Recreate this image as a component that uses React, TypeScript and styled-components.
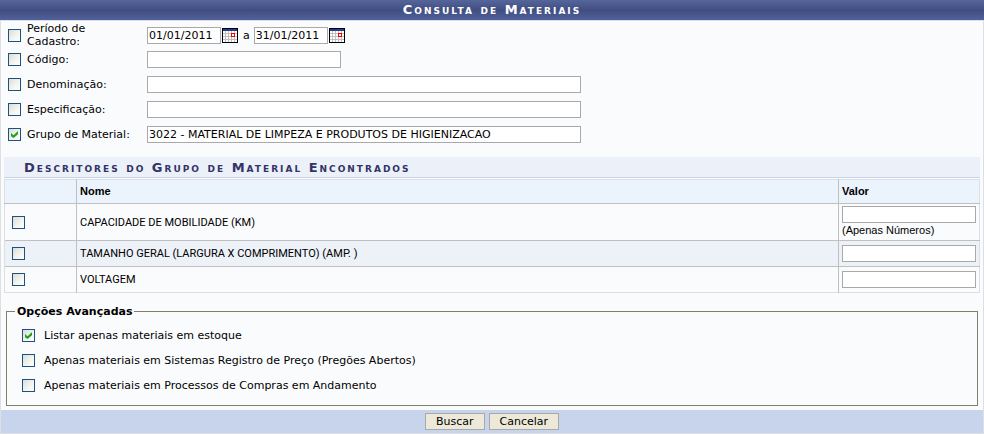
import React, { useState } from "react";
import styled, { createGlobalStyle } from "styled-components";

const GlobalStyle = createGlobalStyle`
  * { box-sizing: border-box; }
  body {
    margin: 0;
    background: #fafbfd;
    color: #000;
    font-family: "DejaVu Sans", Verdana, sans-serif;
    font-size: 11px;
    line-height: 13px;
  }
`;

const Form = styled.form`
  display: flex;
  flex-direction: column;
  background: #fafbfd;
  border: 1px solid #dedfe3;
  border-top: 0;
`;

const Title = styled.h1`
  margin: 0 -1px;
  height: 21px;
  line-height: 20px;
  border-bottom: 1px solid #dedfe3;
  background: linear-gradient(#56659a 0%, #404e82 50%, #51609a 100%);
  color: #fff;
  font-size: 13px;
  font-variant: small-caps;
  letter-spacing: 2px;
  text-align: center;
`;

const Fields = styled.div`
  display: flex;
  flex-direction: column;
  padding: 1px 7px 10px;
`;

const FieldRow = styled.div`
  display: grid;
  grid-template-columns: 13px 114px minmax(0, 1fr);
  column-gap: 6px;
  align-items: center;
  height: 25px;
`;

const FieldLabel = styled.label`
  line-height: 13px;
`;

const FieldBody = styled.div`
  display: flex;
  align-items: center;
  gap: 1px;
`;

const TextBox = styled.input<{ $size?: "date" | "code" | "wide" | "full" }>`
  width: ${(p) =>
    p.$size === "date" ? "74px" : p.$size === "code" ? "194px" : p.$size === "wide" ? "434px" : "100%"};
  max-width: 100%;
  height: 17px;
  margin: 0;
  padding: 0 1px;
  border: 1px solid #a9a9a9;
  border-radius: 0;
  background: #fff;
  color: #000;
  font: 11px "DejaVu Sans", Verdana, sans-serif;
  outline-offset: 0;
`;

const CheckBox = styled.input.attrs({ type: "checkbox" })`
  appearance: none;
  display: grid;
  place-items: center;
  flex: none;
  width: 13px;
  height: 13px;
  margin: 0;
  border: 1px solid #1c5180;
  background: linear-gradient(135deg, #dcdcd7 0%, #f3f3ef 55%, #fff 100%);

  &:checked::before {
    content: "";
    width: 7px;
    height: 7px;
    background: #21a121;
    clip-path: polygon(0 28%, 36% 60%, 100% 0, 100% 46%, 36% 100%, 0 76%);
  }
`;

const CalendarButton = styled.button`
  display: flex;
  width: 16px;
  height: 15px;
  padding: 0;
  border: 0;
  background: none;
`;

const Until = styled.span`
  padding: 0 3px 0 4px;
`;

const SectionTitle = styled.h2`
  margin: 0 3px 1px;
  padding-left: 20px;
  height: 21px;
  line-height: 21px;
  border-bottom: 1px solid #c8d5ec;
  background: #ecf1f9;
  color: #333366;
  font-size: 13px;
  font-variant: small-caps;
  letter-spacing: 2px;
`;

const TableWrap = styled.div`
  padding: 0 3px;
`;

const Table = styled.table`
  width: 100%;
  table-layout: fixed;
  border-collapse: collapse;
  border: 1px solid #dedfe3;
  font-family: "Liberation Sans", Arial, sans-serif;
`;

const HeadCell = styled.th<{ $width?: string }>`
  width: ${(p) => p.$width ?? "auto"};
  height: 24px;
  padding: 0 3px;
  border-left: 1px solid #c0c0c0;
  border-bottom: 1px solid #c0c0c0;
  background: #ebf3fd;
  text-align: left;
  &:first-child { border-left-color: #dedfe3; }
`;

const BodyRow = styled.tr`
  border-bottom: 1px solid #c0c0c0;
  &:nth-child(even) { background: #edf1f8; }
  &:last-child { border-bottom-color: #dedfe3; }
`;

const Cell = styled.td`
  height: 26px;
  padding: 2px 3px;
  border-left: 1px solid #c0c0c0;
  line-height: 15px;
  &:first-child {
    padding-left: 7px;
    border-left-color: #dedfe3;
  }
`;

const NameCell = styled(Cell)`
  font-family: Roboto, Arial, sans-serif;
`;

const Hint = styled.span`
  display: block;
`;

const Options = styled.fieldset`
  display: flex;
  flex-direction: column;
  margin: 12px 5px 4px;
  padding: 5px 15px 7px;
  border: 1px solid #80806f;
  min-width: 0;
`;

const Legend = styled.legend`
  margin-left: -7px;
  padding: 0 2px;
  font-weight: bold;
`;

const OptionRow = styled.label`
  display: flex;
  align-items: center;
  gap: 9px;
  height: 25px;
`;

const Footer = styled.footer`
  display: flex;
  justify-content: center;
  gap: 4px;
  padding: 3px 0;
  background: #c8d4ec;
`;

const Button = styled.button`
  height: 17px;
  padding: 0 10px;
  border: 1px solid #a9a9a9;
  background: #ece9d8;
  color: #000;
  font: 11px/13px "DejaVu Sans", Verdana, sans-serif;
`;

function CalendarIcon() {
  return (
    <svg width="16" height="15" viewBox="0 0 16 15" shapeRendering="crispEdges" aria-hidden="true">
      <rect width="16" height="15" fill="#000" />
      <rect x="1" y="1" width="14" height="13" fill="#fff" />
      <path d="M1 5.5H15M1 8.5H15M1 11.5H15M3.5 3V14M6.5 3V14M9.5 3V14M12.5 3V14" stroke="#c0c0c0" fill="none" />
      <rect x="1" y="1" width="14" height="2" fill="#23408e" />
      <rect x="9.5" y="5.5" width="3" height="3" fill="#fff" stroke="#f00" />
    </svg>
  );
}

type FieldProps = {
  id: string;
  label: string;
  checked?: boolean;
  children: React.ReactNode;
};

function Field({ id, label, checked, children }: FieldProps) {
  const [on, setOn] = useState(!!checked);
  return (
    <FieldRow>
      <CheckBox id={id} checked={on} onChange={(e) => setOn(e.target.checked)} />
      <FieldLabel htmlFor={id}>{label}</FieldLabel>
      <FieldBody>{children}</FieldBody>
    </FieldRow>
  );
}

const descriptors = [
  { name: "CAPACIDADE DE MOBILIDADE (KM)", hint: "(Apenas Números)" },
  { name: "TAMANHO GERAL (LARGURA X COMPRIMENTO) (AMP. )" },
  { name: "VOLTAGEM" },
];

const options = [
  { label: "Listar apenas materiais em estoque", on: true },
  { label: "Apenas materiais em Sistemas Registro de Preço (Pregões Abertos)", on: false },
  { label: "Apenas materiais em Processos de Compras em Andamento", on: false },
];

export default function App() {
  return (
    <>
      <GlobalStyle />
      <Form onSubmit={(e) => e.preventDefault()}>
        <Title>Consulta de Materiais</Title>
        <Fields>
          <Field id="periodo" label="Período de Cadastro:">
            <TextBox $size="date" aria-label="Data inicial" defaultValue="01/01/2011" />
            <CalendarButton type="button" aria-label="Escolher data inicial">
              <CalendarIcon />
            </CalendarButton>
            <Until>a</Until>
            <TextBox $size="date" aria-label="Data final" defaultValue="31/01/2011" />
            <CalendarButton type="button" aria-label="Escolher data final">
              <CalendarIcon />
            </CalendarButton>
          </Field>
          <Field id="codigo" label="Código:">
            <TextBox $size="code" aria-label="Código" />
          </Field>
          <Field id="denominacao" label="Denominação:">
            <TextBox $size="wide" aria-label="Denominação" />
          </Field>
          <Field id="especificacao" label="Especificação:">
            <TextBox $size="wide" aria-label="Especificação" />
          </Field>
          <Field id="grupo" label="Grupo de Material:" checked>
            <TextBox
              $size="wide"
              aria-label="Grupo de Material"
              defaultValue="3022 - MATERIAL DE LIMPEZA E PRODUTOS DE HIGIENIZACAO"
            />
          </Field>
        </Fields>

        <SectionTitle>Descritores do Grupo de Material Encontrados</SectionTitle>
        <TableWrap>
          <Table>
            <thead>
              <tr>
                <HeadCell $width="72px" />
                <HeadCell>Nome</HeadCell>
                <HeadCell $width="141px">Valor</HeadCell>
              </tr>
            </thead>
            <tbody>
              {descriptors.map((d) => (
                <BodyRow key={d.name}>
                  <Cell>
                    <CheckBox aria-label={d.name} />
                  </Cell>
                  <NameCell>{d.name}</NameCell>
                  <Cell>
                    <TextBox $size="full" aria-label={`Valor: ${d.name}`} />
                    {d.hint && <Hint>{d.hint}</Hint>}
                  </Cell>
                </BodyRow>
              ))}
            </tbody>
          </Table>
        </TableWrap>

        <Options>
          <Legend>Opções Avançadas</Legend>
          {options.map((o) => (
            <OptionRow key={o.label}>
              <CheckBox defaultChecked={o.on} />
              {o.label}
            </OptionRow>
          ))}
        </Options>

        <Footer>
          <Button type="submit">Buscar</Button>
          <Button type="button">Cancelar</Button>
        </Footer>
      </Form>
    </>
  );
}
